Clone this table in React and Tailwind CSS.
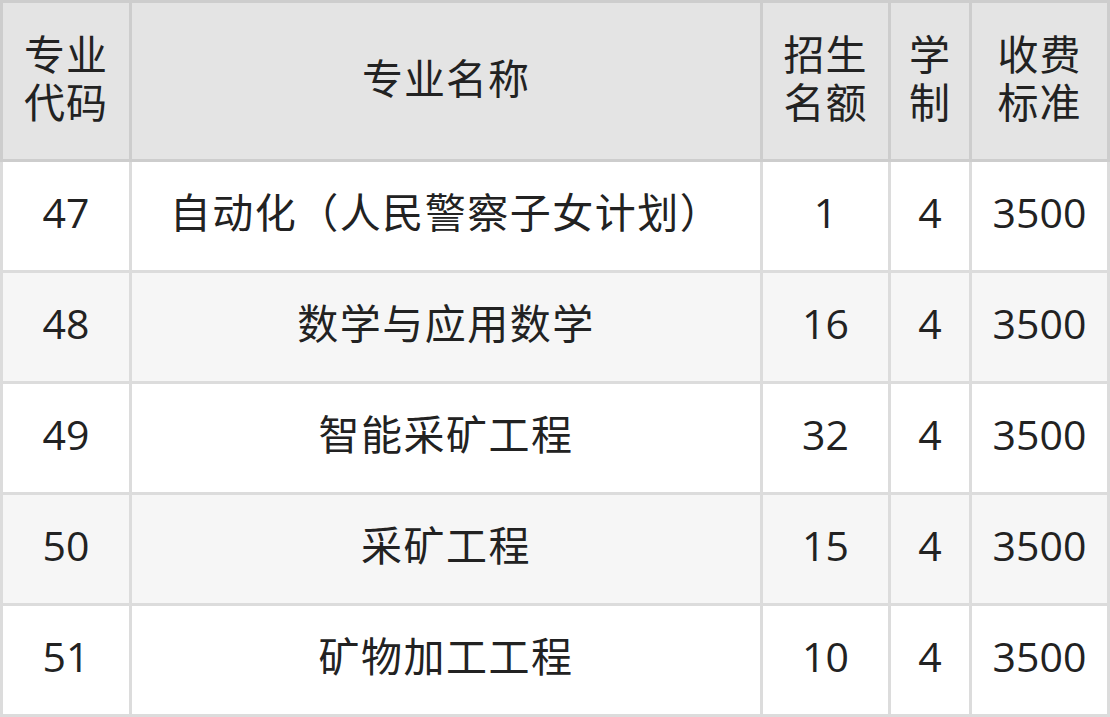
import React from 'react';

const widths = ['w-[129px]', 'w-[631px]', 'w-[128px]', 'w-[81px]', 'w-[138px]'];

const headers = [
  ['专业', '代码'],
  ['专业名称'],
  ['招生', '名额'],
  ['学', '制'],
  ['收费', '标准'],
];

const rows = [
  ['47', '自动化（人民警察子女计划）', '1', '4', '3500'],
  ['48', '数学与应用数学', '16', '4', '3500'],
  ['49', '智能采矿工程', '32', '4', '3500'],
  ['50', '采矿工程', '15', '4', '3500'],
  ['51', '矿物加工工程', '10', '4', '3500'],
];

export default function App() {
  return (
    <div
      className="w-[1110px] h-[717px] overflow-hidden bg-white text-[#222] text-[41px]"
      style={{ fontFamily: '"Open Sans", "Noto Sans CJK SC", sans-serif' }}
    >
      {/* Header */}
      <div className="flex border-t-[3px] border-l-[3px] border-[#cdcdcd] bg-[#e4e4e4]">
        {headers.map((lines, i) => (
          <div
            key={i}
            className={`${widths[i]} h-[159px] pb-[6px] border-r-[3px] border-b-[3px] border-[#cdcdcd] flex flex-col items-center justify-center leading-[48px] tracking-[1px]`}
          >
            {lines.map((l) => (
              <span key={l}>{l}</span>
            ))}
          </div>
        ))}
      </div>

      {/* Body */}
      {rows.map((row, r) => (
        <div
          key={r}
          className={`flex border-l-[3px] border-[#dcdcdc] ${r % 2 === 1 ? 'bg-[#f6f6f6]' : 'bg-white'}`}
        >
          {row.map((cell, i) => (
            <div
              key={i}
              className={`${widths[i]} h-[111px] pb-[6px] border-r-[3px] border-b-[3px] border-[#dcdcdc] flex items-center justify-center ${i === 1 ? 'tracking-[1.5px]' : ''}`}
            >
              {cell}
            </div>
          ))}
        </div>
      ))}
    </div>
  );
}
